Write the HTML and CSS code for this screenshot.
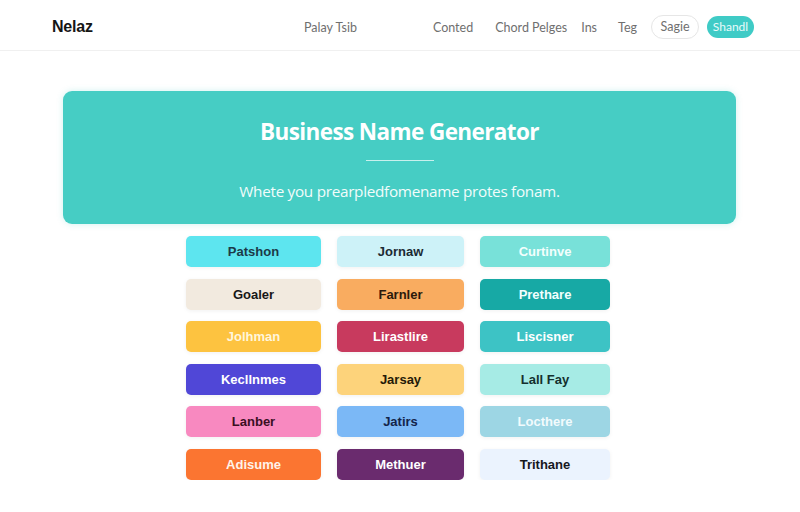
FILE: index.html
```html
<!DOCTYPE html>
<html lang="en">
<head>
    <meta charset="UTF-8">
    <meta name="viewport" content="width=device-width, initial-scale=1.0">
    <title>Business Name Generator</title>
    <link rel="stylesheet" href="styles.css">
</head>
<body>
    <header class="topbar">
        <div class="logo">Nelaz</div>
        <nav class="nav">
            <a class="nav-link">Palay Tsib</a>
            <a class="nav-link conted">Conted</a>
            <a class="nav-link chord">Chord Pelges</a>
            <a class="nav-link ins">Ins</a>
            <a class="nav-link teg">Teg</a>
            <a class="btn-outline">Sagie</a>
            <a class="btn-fill">Shandl</a>
        </nav>
    </header>
    <main>
        <section class="hero">
            <h1>Business Name Generator</h1>
            <div class="divider"></div>
            <p>Whete you prearpledfomename protes fonam.</p>
        </section>
        <section class="names">
            <div class="name c-cyan">Patshon</div>
            <div class="name c-icecyan">Jornaw</div>
            <div class="name c-aqua">Curtinve</div>

            <div class="name c-beige">Goaler</div>
            <div class="name c-orange">Farnler</div>
            <div class="name c-teal">Prethare</div>

            <div class="name c-yellow">Jolhman</div>
            <div class="name c-crimson">Lirastlire</div>
            <div class="name c-sea">Liscisner</div>

            <div class="name c-indigo">Kecllnmes</div>
            <div class="name c-sand">Jarsay</div>
            <div class="name c-mint">Lall Fay</div>

            <div class="name c-pink">Lanber</div>
            <div class="name c-sky">Jatirs</div>
            <div class="name c-powder">Locthere</div>

            <div class="name c-tangerine">Adisume</div>
            <div class="name c-plum">Methuer</div>
            <div class="name c-ice">Trithane</div>
        </section>
    </main>
</body>
</html>
```

FILE: styles.css
```css
body {
    margin: 0;
    background: #ffffff;
    font-family: "Open Sans", "Noto Sans", sans-serif;
}
.topbar {
    height: 50px;
    display: flex;
    align-items: center;
    justify-content: space-between;
    padding: 0 46px 0 52px;
    border-bottom: 1px solid #f0f0f0;
}
.logo {
    font-family: "Liberation Sans", Arial, sans-serif;
    font-weight: bold;
    font-size: 16px;
    color: #151515;
    letter-spacing: -0.2px;
    margin-top: 4px;
}
.nav {
    display: flex;
    align-items: center;
    font-family: "Lato", sans-serif;
    font-size: 12.5px;
    color: #6f6f6f;
    margin-top: 4px;
}
.conted {
    margin-left: 76px;
}
.chord {
    margin-left: 22px;
}
.ins {
    margin-left: 14px;
}
.teg {
    margin-left: 21px;
}
.btn-outline,
.btn-fill {
    box-sizing: border-box;
    text-align: center;
}
.btn-outline {
    margin-left: 14px;
    width: 48px;
    height: 24px;
    line-height: 22px;
    border: 1px solid #e6e6e6;
    border-radius: 13px;
}
.btn-fill {
    margin-left: 8px;
    width: 47px;
    height: 22px;
    line-height: 22px;
    border-radius: 12px;
    background: #3fcbc6;
    color: #e9fbfb;
    font-size: 12px;
}
.hero {
    margin: 40px 64px 0 63px;
    height: 133px;
    border-radius: 9px;
    background: #46cdc4;
    color: #ffffff;
    text-align: center;
    box-shadow: 0 0 6px rgba(70, 205, 196, 0.25);
    overflow: hidden;
}
.hero h1 {
    margin: 0;
    padding-top: 26px;
    font-size: 22.5px;
    font-weight: 700;
    letter-spacing: -0.6px;
    line-height: 30px;
}
.divider {
    width: 68px;
    height: 1px;
    margin: 13px auto 0;
    background: rgba(255, 255, 255, 0.7);
}
.hero p {
    margin: 20px 0 0;
    font-size: 15.3px;
    letter-spacing: -0.3px;
    color: #f2fcfb;
}
.names {
    display: grid;
    grid-template-columns: 135px 127px 130px;
    column-gap: 16px;
    row-gap: 11.6px;
    justify-content: center;
    margin: 12px 4px 0 0;
}
.name {
    height: 31px;
    line-height: 31px;
    border-radius: 5px;
    text-align: center;
    font-family: "Liberation Sans", Arial, sans-serif;
    font-size: 13px;
    font-weight: bold;
    box-shadow: 0 1px 4px rgba(0, 0, 0, 0.06);
}
.c-cyan { background: #5de5ef; color: #1c3a48; }
.c-icecyan { background: #cdf2f8; color: #1b2a33; }
.c-aqua { background: #78e1d9; color: #f3fffd; }
.c-beige { background: #f2eadf; color: #171717; }
.c-orange { background: #f9ac60; color: #2b1a0c; }
.c-teal { background: #17a9a5; color: #f2fffe; }
.c-yellow { background: #fdc340; color: #fff6dc; }
.c-crimson { background: #c83a5e; color: #ffffff; }
.c-sea { background: #3dc3c5; color: #ffffff; }
.c-indigo { background: #5047d7; color: #ffffff; }
.c-sand { background: #fdd37b; color: #241a08; }
.c-mint { background: #a6ebe5; color: #14302e; }
.c-pink { background: #f889c0; color: #3a0f22; }
.c-sky { background: #7bb8f6; color: #13244a; }
.c-powder { background: #9dd6e4; color: #f2fbfd; }
.c-tangerine { background: #fb7531; color: #fff3ea; }
.c-plum { background: #6a2b6e; color: #ffffff; }
.c-ice { background: #ebf3fe; color: #16181d; }
```
